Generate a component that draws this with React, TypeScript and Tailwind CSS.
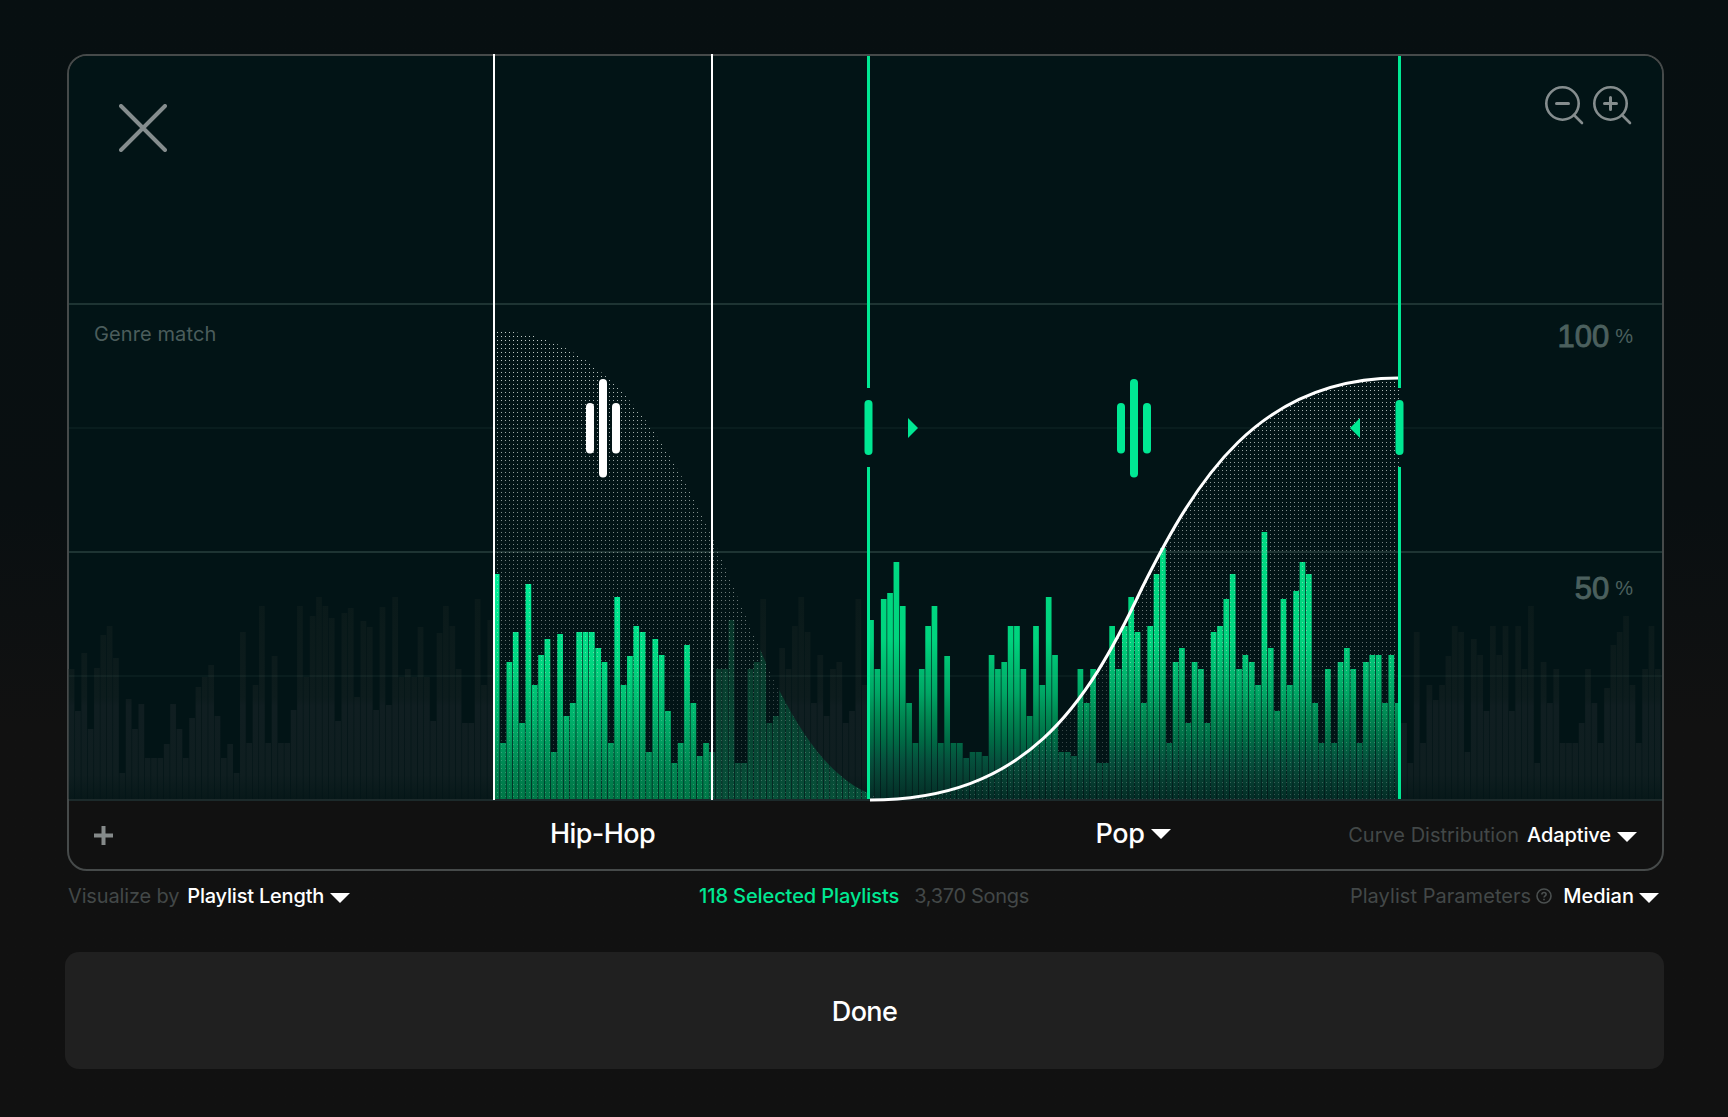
import type { ReactNode } from "react";

const PITCH = 6.345;
const ORIGIN = 68.7;
const BASELINE = 799;

// Bar heights in px, one entry per playlist bucket, split at the selection edges.
const BEFORE = [
  130, 88, 146, 70, 131, 164, 173, 141, 26, 100, 70, 95, 41, 41, 41, 55, 95, 70, 41, 81, 112, 122,
  134, 83, 41, 55, 26, 167, 56, 114, 193, 56, 143, 56, 56, 89, 193, 122, 183, 202, 193, 181, 78, 186,
  191, 102, 178, 172, 89, 192, 94, 202, 122, 130, 122, 172, 122, 78, 166, 193, 173, 130, 76, 76, 200,
  114, 179,
];
const HIP_HOP = [
  225, 56, 137, 167, 76, 215, 114, 144, 160, 47, 165, 83, 96, 167, 167, 167, 151, 137, 56, 202, 114,
  143, 173, 167, 47, 160, 144, 88, 36, 56, 154, 96, 43, 56, 47,
];
const BETWEEN = [
  47, 130, 130, 179, 36, 36, 130, 137, 200, 76, 83, 151, 130, 173, 202, 167, 96, 144, 83, 130, 137,
  76, 88, 200, 114,
];
const POP = [
  179, 130, 200, 206, 237, 193, 96, 56, 130, 173, 193, 56, 143, 56, 56, 41, 47, 47, 43, 144, 130, 137,
  173, 173, 130, 83, 173, 114, 202, 144, 47, 47, 43, 130, 96, 130, 36, 36, 173, 130, 173, 202, 167, 96,
  173, 225, 251, 56, 137, 151, 76, 137, 130, 76, 167, 173, 200, 225, 130, 144, 137, 114, 267, 151, 88,
  200, 114, 208, 237, 225, 96, 56, 130, 56, 137, 151, 130, 56, 137, 144, 144, 96, 144, 96,
];
const AFTER = [
  76, 36, 167, 56, 114, 99, 114, 143, 173, 167, 47, 160, 144, 88, 173, 144, 173, 88, 173, 130, 193, 36,
  137, 96, 130, 56, 56, 56, 76, 130, 96, 56, 111, 154, 167, 183, 114, 56, 130, 173, 130,
];

const HIP_CURVE =
  "M495 331C590 331 660 415 720 555C765 660 805 780 885 799";
const POP_CURVE =
  "M870 800C1025 800 1086 707 1142 588C1196 480 1258 378 1399 378";

interface BarsProps {
  data: number[];
  start: number;
  fill: string;
}

function Bars({ data, start, fill }: BarsProps) {
  return (
    <g fill={fill}>
      {data.map((height, i) => (
        <rect
          key={i}
          x={ORIGIN + (start + i) * PITCH}
          y={BASELINE - height}
          width={5.7}
          height={height}
        />
      ))}
    </g>
  );
}

function Gradient({ id, y1, y2, stops }: { id: string; y1: number; y2: number; stops: [number, string][] }) {
  return (
    <linearGradient id={id} gradientUnits="userSpaceOnUse" x1="0" x2="0" y1={y1} y2={y2}>
      {stops.map(([offset, color]) => (
        <stop key={offset} offset={offset} stopColor={color} />
      ))}
    </linearGradient>
  );
}

function Grip({ cx, color }: { cx: number; color: string }) {
  return (
    <g fill={color}>
      <rect x={cx - 17} y={403} width={8} height={50.5} rx={4} />
      <rect x={cx - 4} y={379} width={8} height={98.5} rx={4} />
      <rect x={cx + 9} y={403} width={8} height={50.5} rx={4} />
    </g>
  );
}

function Handle({ cx }: { cx: number }) {
  return (
    <g fill="#00e893">
      <rect x={cx - 1.5} y={56} width={3} height={332} />
      <rect x={cx - 4} y={400} width={8} height={55} rx={4} />
      <rect x={cx - 1.5} y={467} width={3} height={332} />
    </g>
  );
}

function Chart() {
  return (
    <svg viewBox="69 56 1593 745" width={1593} height={745} className="block overflow-visible">
      <defs>
        <Gradient
          id="faint"
          y1={597}
          y2={799}
          stops={[
            [0, "#0a1a1a"],
            [0.5, "#0d1c1d"],
            [0.54, "#101e21"],
            [0.88, "#0f1e20"],
            [1, "#071819"],
          ]}
        />
        <Gradient
          id="hip"
          y1={574}
          y2={799}
          stops={[
            [0, "#00ee98"],
            [0.4, "#00d780"],
            [0.65, "#00b06a"],
            [0.88, "#008350"],
            [1, "#007747"],
          ]}
        />
        <Gradient
          id="pop"
          y1={532}
          y2={799}
          stops={[
            [0, "#00dc84"],
            [0.4, "#00d47e"],
            [0.6, "#00a765"],
            [0.69, "#008852"],
            [0.78, "#006b45"],
            [0.85, "#05523d"],
            [0.92, "#064032"],
            [1, "#032d26"],
          ]}
        />
        <Gradient
          id="between"
          y1={620}
          y2={799}
          stops={[
            [0, "#083529"],
            [1, "#075039"],
          ]}
        />
        <Gradient
          id="fade"
          y1={331}
          y2={799}
          stops={[
            [0, "#e0e0e0"],
            [0.45, "#888888"],
            [0.72, "#6a6a6a"],
            [0.75, "#424242"],
            [1, "#3a3a3a"],
          ]}
        />
        <pattern id="dots-hip" patternUnits="userSpaceOnUse" x="497" y="332" width="4" height="4">
          <rect width="1" height="1" fill="#dfe8e4" />
        </pattern>
        <pattern id="dots-pop" patternUnits="userSpaceOnUse" x="1394" y="378" width="4" height="4">
          <rect width="1" height="1" fill="#dfe8e4" />
        </pattern>
        <mask id="fade-mask" maskUnits="userSpaceOnUse" x="480" y="320" width="940" height="480">
          <rect x="480" y="320" width="940" height="480" fill="url(#fade)" />
        </mask>
        <clipPath id="under-hip">
          <path d={`${HIP_CURVE}L495 799Z`} />
        </clipPath>
        <clipPath id="hip-range">
          <rect x="495" y="56" width="217" height="745" />
        </clipPath>
      </defs>

      <Bars data={BEFORE} start={0} fill="url(#faint)" />
      <Bars data={BETWEEN} start={101} fill="url(#faint)" />
      <Bars data={AFTER} start={210} fill="url(#faint)" />
      <g clipPath="url(#under-hip)">
        <Bars data={BETWEEN} start={101} fill="url(#between)" />
      </g>
      <g clipPath="url(#hip-range)">
        <Bars data={HIP_HOP} start={67} fill="url(#hip)" />
      </g>
      <Bars data={POP} start={126} fill="url(#pop)" />

      <g fill="#8fb5a8">
        <rect x="69" y="303" width="1593" height="2" opacity=".2" />
        <rect x="69" y="427" width="1593" height="2" opacity=".06" />
        <rect x="69" y="551" width="1593" height="2" opacity=".2" />
        <rect x="69" y="675" width="1593" height="2" opacity=".06" />
      </g>
      <rect x="69" y="799" width="1593" height="2" fill="#1c2a2b" />

      <g mask="url(#fade-mask)">
        <path d={`${HIP_CURVE}L495 799Z`} fill="url(#dots-hip)" />
        <path d={`${POP_CURVE}V799H870Z`} fill="url(#dots-pop)" />
      </g>

      <path d={POP_CURVE} fill="none" stroke="#fff" strokeWidth="3" />
      <rect x="493" y="54" width="2" height="746" fill="#fff" />
      <rect x="711" y="54" width="2" height="746" fill="#fff" />
      <Handle cx={868.5} />
      <Handle cx={1399.5} />
      <Grip cx={603} color="#fff" />
      <Grip cx={1134} color="#00e893" />
      <path d="M908 418L918 428L908 438Z" fill="#00e893" />
      <path d="M1360 418L1350 428L1360 438Z" fill="#00e893" />
    </svg>
  );
}

function Caret() {
  return (
    <svg viewBox="0 0 20 10" width={20} height={10} className="shrink-0">
      <path d="M0 0H20L10 10Z" fill="#fff" />
    </svg>
  );
}

function ZoomIcon({ plus = false }: { plus?: boolean }) {
  return (
    <svg
      viewBox="0 0 40 40"
      width={40}
      height={40}
      fill="none"
      stroke="#858d8e"
      strokeWidth="2.6"
      strokeLinecap="round"
    >
      <circle cx="18.5" cy="18.5" r="16.2" />
      <path d="M30 30L38 38" />
      <path d={plus ? "M12.5 18.5H24.5M18.5 12.5V24.5" : "M12.5 18.5H24.5"} strokeWidth="3" />
    </svg>
  );
}

function Scale({ value, className }: { value: string; className: string }) {
  return (
    <div
      className={`absolute right-[29px] flex items-start font-['Liberation_Sans',sans-serif] text-[#4b605e] ${className}`}
    >
      <span className="text-[31px] leading-8 [-webkit-text-stroke:0.9px_#4b605e]">{value}</span>
      <span className="ml-[6px] text-xl leading-[30px]">%</span>
    </div>
  );
}

interface SelectProps {
  label: ReactNode;
  children: string;
  className?: string;
}

function Select({ label, children, className = "" }: SelectProps) {
  return (
    <button className="flex items-center whitespace-nowrap">
      {label}
      <span className={`font-medium text-white ${className}`}>{children}</span>
      <span className="mt-[3px] ml-1.5">
        <Caret />
      </span>
    </button>
  );
}

export default function App() {
  return (
    <div className="h-[1117px] w-[1728px] bg-[#111111] bg-linear-to-b from-[#070f11] from-0% via-[#090f11] via-45% to-[#111111] to-65% pt-[54px] font-['Inter',sans-serif] text-xl leading-6 text-[#434848]">
      <section className="relative ml-[67px] h-[817px] w-[1597px] rounded-[20px] border-2 border-[#464a4a] bg-[#111111]">
        <div className="rounded-t-[18px] bg-[#021416]">
          <Chart />
        </div>

        <button aria-label="Close" className="absolute top-12 left-[50px]">
          <svg viewBox="0 0 48 48" width={48} height={48} stroke="#858d8e" strokeWidth="4" strokeLinecap="round">
            <path d="M2 2L46 46M46 2L2 46" />
          </svg>
        </button>
        <div className="absolute top-[29px] right-[30.5px] flex gap-2">
          <button aria-label="Zoom out"><ZoomIcon /></button>
          <button aria-label="Zoom in"><ZoomIcon plus /></button>
        </div>
        <span className="absolute top-[266px] left-[25px] tracking-[0.1px] text-[#4b5d5c]">Genre match</span>
        <Scale value="100" className="top-[265px]" />
        <Scale value="50" className="top-[517px]" />

        <div className="flex h-[68px] items-center">
          <div className="w-[425px] shrink-0 pl-[25px]">
            <button aria-label="Add genre" className="block">
              <svg viewBox="0 0 19 19" width={19} height={19} stroke="#858a8a" strokeWidth="4">
                <path d="M0 9.5H19M9.5 0V19" />
              </svg>
            </button>
          </div>
          <div className="w-[217px] shrink-0 pb-[3px] text-center text-[27px] leading-8 font-medium tracking-[-0.6px] text-white">
            Hip-Hop
          </div>
          <div className="ml-[156px] flex w-[533px] shrink-0 items-center justify-center gap-[7px] pb-[3px]">
            <span className="text-[27px] leading-8 font-medium tracking-[-0.4px] text-white">Pop</span>
            <Caret />
          </div>
          <div className="flex min-w-0 flex-1 justify-end pr-[25px]">
            <Select label={<span className="mr-2">Curve Distribution</span>} className="tracking-[-0.1px]">
              Adaptive
            </Select>
          </div>
        </div>
      </section>

      <div className="mt-[13px] ml-[68px] grid w-[1591px] grid-cols-[631px_1fr_auto] items-center">
        <Select
          label={<span className="mr-[8px] tracking-[-0.15px]">Visualize by</span>}
          className="tracking-[-0.2px]"
        >
          Playlist Length
        </Select>
        <div className="flex gap-[15px]">
          <span className="font-medium tracking-[-0.1px] text-[#00e893]">118 Selected Playlists</span>
          <span className="tracking-[-0.3px]">3,370 Songs</span>
        </div>
        <Select
          label={
            <>
              <span className="tracking-[0.05px]">Playlist Parameters</span>
              <svg
                viewBox="0 0 16 16"
                width={16}
                height={16}
                fill="none"
                stroke="#4b5050"
                strokeWidth="1.6"
                className="mr-[11px] ml-[5px]"
              >
                <circle cx="8" cy="8" r="7" />
                <path d="M5.9 6.4C5.9 3.9 10.1 3.9 10.1 6.4C10.1 7.8 8 7.8 8 9.5M8 10.8V12.2" />
              </svg>
            </>
          }
          className="-mr-px"
        >
          Median
        </Select>
      </div>

      <button className="mt-[44px] ml-[65px] block h-[117px] w-[1599px] rounded-[14px] bg-[#202020] pt-[3px] text-[27px] font-medium tracking-[-0.6px] text-white">
        Done
      </button>
    </div>
  );
}
